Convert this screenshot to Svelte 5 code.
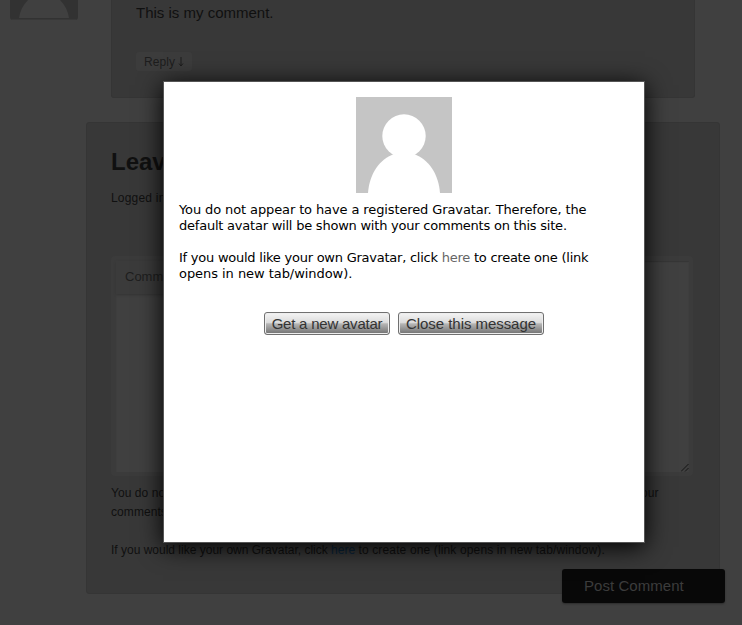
<script>
  const notice = [
    { text: 'You do not appear to have a registered Gravatar. Therefore, the', spacing: -0.115 },
    { text: 'default avatar will be shown with your comments on this site.', spacing: -0.225 }
  ];
  const buttons = [
    { label: 'Get a new avatar', width: 126, spacing: -0.22 },
    { label: 'Close this message', width: 146, spacing: -0.05 }
  ];
</script>

<div class="page">
  <div class="comment-row">
    <svg class="side-avatar" width="68" height="20" viewBox="0 0 68 20">
      <path d="M0 0H68V17Q68 20 65 20H3Q0 20 0 17Z" fill="#323232" />
      <path d="M9 18C10 11 13 5 18 0H50C55 5 58 11 59 18Z" fill="#404040" />
      <path d="M2 19.5H66" stroke="#383838" />
    </svg>
    <article class="comment">
      <p>This is my comment.</p>
      <a class="reply" href="#respond">Reply <svg width="6" height="10" viewBox="0 0 6 10"><path d="M3 0V9M1 6.5L3 9L5 6.5" fill="none" stroke="#1d1d1d" /></svg></a>
    </article>
  </div>

  <section class="respond">
    <h3>Leave a Reply</h3>
    <p class="logged">Logged in as admin. Log out?</p>
    <div class="field">
      <div class="label">Comment</div>
      <div class="textarea">
        <svg width="8" height="8" viewBox="0 0 8 8"><path d="M0 7.5L7.5 0M4 7.5L7.5 4" stroke="#151515" /></svg>
      </div>
    </div>
    <p class="help wide">You do not appear to have a registered Gravatar. Therefore, the default avatar will be shown with your<br />comments on this site.</p>
    <p class="help own">If you would like your own Gravatar, click <a href="#here">here</a> <span class="tail">to create one (link opens in new tab/window).</span></p>
  </section>
  <div class="submit">Post Comment</div>
</div>

<div class="modal">
  <svg class="avatar" width="96" height="96" viewBox="0 0 96 96">
    <rect width="96" height="96" fill="#c5c5c5" />
    <circle cx="48" cy="39" r="21.7" fill="#fff" />
    <path d="M12 96C13.500 77 23 62.500 38 57H58C73 62.500 82.500 77 84 96Z" fill="#fff" />
  </svg>
  <div class="notice">
    {#each notice as line}
      <div style="letter-spacing: {line.spacing}px">{line.text}</div>
    {/each}
    <div class="second">If you would like your own Gravatar, click <a href="#new">here</a> to create one (link</div>
    <div class="last">opens in new tab/window).</div>
  </div>
  <div class="buttons">
    {#each buttons as b}
      <button style="width: {b.width}px; letter-spacing: {b.spacing}px">{b.label}</button>
    {/each}
  </div>
</div>

<style>
  :global(body) { background: #404040; overflow: hidden; }
  .page {
    height: 625px;
    overflow: hidden;
    font-family: 'Liberation Sans', Arial, sans-serif;
    color: #101010;
    background: #404040;
  }
  p, h3 { margin: 0; }
  a { text-decoration: none; }
  .comment-row { display: flex; height: 98px; }
  .side-avatar { margin-left: 10px; flex: none; }
  .comment {
    box-sizing: border-box;
    width: 584px;
    margin-left: 33px;
    padding: 3px 24px 0;
    background: #383838;
    border: 1px solid #353535;
    border-width: 0 1px 1px;
    border-radius: 0 0 3px 3px;
  }
  .comment p { font-size: 15px; line-height: 20px; height: 49px; white-space: nowrap; }
  .reply {
    display: flex;
    align-items: center;
    box-sizing: border-box;
    width: 56px;
    height: 19px;
    padding-left: 8px;
    gap: 3px;
    border-radius: 3px;
    background: #3c3c3c;
    color: #1d1d1d;
    font-size: 12px;
    letter-spacing: 0.1px;
  }
  .respond {
    box-sizing: border-box;
    width: 634px;
    height: 472px;
    margin: 24px 0 0 86px;
    padding: 24px 24px 0;
    background: #383838;
    border: 1px solid #353535;
    border-radius: 3px;
    white-space: nowrap;
  }
  h3 { font-size: 24px; line-height: 30px; }
  .logged { margin-top: 11px; font-size: 12px; line-height: 20px; letter-spacing: 0.2px; }
  .field {
    box-sizing: border-box;
    width: 582px;
    height: 220px;
    margin-top: 48px;
    padding: 5px 4px 4px 5px;
    border-radius: 4px;
    background: #3b3b3b;
    display: flex;
  }
  .label {
    box-sizing: border-box;
    position: relative;
    flex: none;
    width: 100px;
    height: 33px;
    padding: 6px 9px;
    margin-right: -100px;
    background: #3b3b3b;
    box-shadow: 0 1px 2px #343434;
    color: #1e1e1e;
    font-size: 13px;
    line-height: 20px;
  }
  .textarea {
    flex: 1;
    display: flex;
    align-items: flex-end;
    justify-content: flex-end;
    background: #404040;
    box-shadow: inset 0 1px 1px #363636;
  }
  .help { font-size: 12px; line-height: 19px; }
  .wide { margin-top: 8px; letter-spacing: 0.07px; }
  .own { margin-top: 19px; }
  .own a { color: #09243c; }
  .tail { letter-spacing: 0.14px; }
  .submit {
    box-sizing: border-box;
    width: 163px;
    height: 34px;
    margin: -25px 0 0 562px;
    padding-left: 22px;
    position: relative;
    border-radius: 3px;
    background: #080808;
    box-shadow: 0 1px 2px #2b2b2b;
    color: #3c3c3c;
    font-size: 15px;
    line-height: 34px;
    letter-spacing: 0.05px;
  }
  .modal {
    position: absolute;
    z-index: 10;
    left: 163px;
    top: 81px;
    box-sizing: border-box;
    width: 482px;
    height: 462px;
    padding: 15px;
    border: 1px solid #555;
    background: #fff;
    box-shadow: 0 4px 23px #000;
    display: flex;
    flex-direction: column;
  }
  .avatar { align-self: center; flex: none; }
  .notice {
    margin-top: 9px;
    font: 13px/16px Verdana, 'DejaVu Sans', sans-serif;
    color: #000;
    white-space: nowrap;
  }
  .notice a { color: #666; }
  .second { margin-top: 16px; letter-spacing: -0.24px; }
  .last { letter-spacing: -0.05px; }
  .buttons { display: flex; justify-content: center; gap: 8px; margin-top: 30px; }
  button {
    box-sizing: border-box;
    height: 23px;
    padding: 0;
    border: 1px solid #707070;
    border-radius: 3px;
    background: linear-gradient(#f4f4f4, #dcdcdc 45%, #b5b5b5 52%, #777 95%);
    box-shadow: inset 0 0 0 1px #eee;
    color: #333;
    font: 15px/20px 'Liberation Sans', Arial, sans-serif;
    white-space: nowrap;
  }
</style>
